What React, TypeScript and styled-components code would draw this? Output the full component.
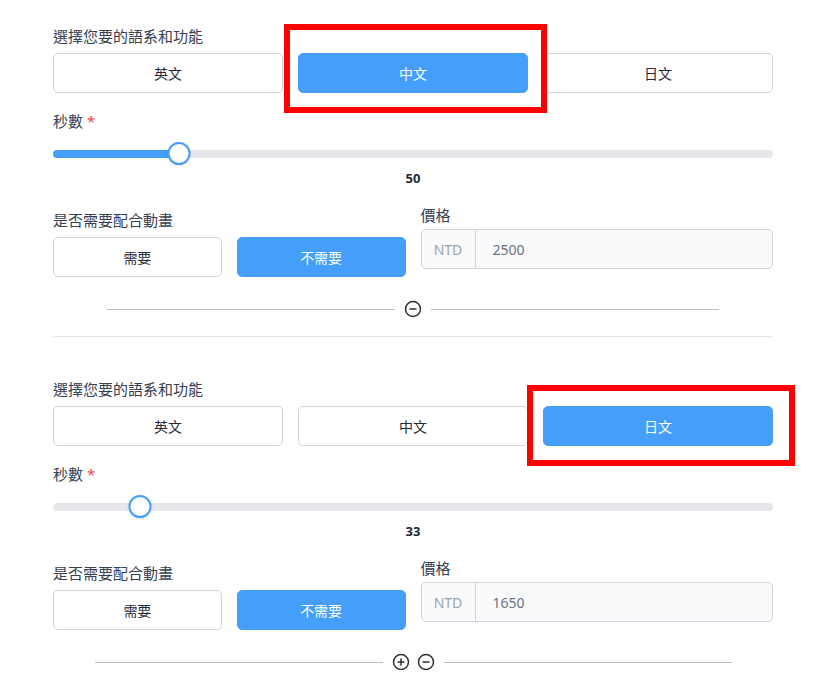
import styled, { createGlobalStyle } from 'styled-components'
import { CirclePlus, CircleMinus } from 'lucide-react'

const GlobalStyle = createGlobalStyle`
  body {
    margin: 0;
    background: #ffffff;
    font-family: "Noto Sans", "Noto Sans CJK TC", sans-serif;
    color: #1f2937;
  }
`

const BLUE = '#459ffa'

const Page = styled.div`
  width: 720px;
  padding: 25px 0 0 53px;
`

const Section = styled.section`
  display: flex;
  flex-direction: column;
`

const FieldLabel = styled.div<{ $top?: number }>`
  font-size: 15px;
  line-height: 22px;
  color: #374151;
  margin-top: ${p => p.$top ?? 0}px;
`

const Required = styled.span`
  color: #ef4444;
  margin-left: 4px;
`

const ButtonRow = styled.div<{ $cols: number; $gap: number; $top: number }>`
  display: grid;
  grid-template-columns: repeat(${p => p.$cols}, 1fr);
  gap: ${p => p.$gap}px;
  margin-top: ${p => p.$top}px;
`

const Choice = styled.div<{ $active?: boolean }>`
  position: relative;
  height: 40px;
  box-sizing: border-box;
  display: flex;
  align-items: center;
  justify-content: center;
  padding-bottom: 1px;
  border-radius: 5px;
  font-size: 14px;
  border: 1px solid ${p => (p.$active ? BLUE : '#d1d5db')};
  background: ${p => (p.$active ? BLUE : '#ffffff')};
  color: ${p => (p.$active ? '#ffffff' : '#1f2937')};
`

const Highlight = styled.div<{ $t: number; $r: number; $b: number; $l: number }>`
  position: absolute;
  top: -${p => p.$t}px;
  right: -${p => p.$r}px;
  bottom: -${p => p.$b}px;
  left: -${p => p.$l}px;
  border: 6px solid #ff0000;
  z-index: 2;
  pointer-events: none;
`

const SliderWrap = styled.div`
  position: relative;
  height: 23px;
  margin-top: 10px;
`

const Track = styled.div`
  position: absolute;
  left: 0;
  right: 0;
  top: 7.5px;
  height: 8px;
  border-radius: 4px;
  background: #e5e7eb;
`

const Fill = styled.div`
  position: absolute;
  left: 0;
  top: 7.5px;
  height: 8px;
  border-radius: 4px;
  background: ${BLUE};
`

const Thumb = styled.div`
  position: absolute;
  top: 0;
  width: 23px;
  height: 23px;
  box-sizing: border-box;
  border-radius: 50%;
  border: 2px solid ${BLUE};
  background: #ffffff;
  box-shadow: 0 1px 3px rgba(0, 0, 0, 0.12);
  transform: translateX(-50%);
`

const SliderValue = styled.div`
  text-align: center;
  font-size: 13px;
  font-weight: 700;
  line-height: 18px;
  color: #1f2937;
  margin-top: 4px;
`

const TwoCols = styled.div`
  display: grid;
  grid-template-columns: 1fr 1fr;
  gap: 15px;
  margin-top: 17px;
`

const Column = styled.div<{ $pad?: number }>`
  display: flex;
  flex-direction: column;
  padding-top: ${p => p.$pad ?? 0}px;
`

const InputGroup = styled.div`
  display: flex;
  height: 40px;
  box-sizing: border-box;
  margin-top: 3px;
  border: 1px solid #d1d5db;
  border-radius: 5px;
  background: #f9fafb;
  font-size: 14px;
`

const Addon = styled.div`
  width: 53px;
  display: flex;
  align-items: center;
  justify-content: center;
  border-right: 1px solid #d1d5db;
  color: #9ca3af;
`

const InputValue = styled.div`
  display: flex;
  align-items: center;
  padding-left: 17px;
  color: #6b7280;
`

const Divider = styled.div`
  display: flex;
  align-items: center;
  justify-content: center;
  gap: 9px;
  height: 16px;
  margin-top: 24px;
  color: #2f2f2f;
`

const DividerLine = styled.div`
  width: 40%;
  height: 1px;
  background: #bdbdbd;
`

const Icons = styled.div`
  display: flex;
  gap: 7px;
  svg {
    display: block;
  }
`

const Separator = styled.hr`
  border: none;
  height: 1px;
  background: #e5e7eb;
  margin: 19px 0 41px;
`

const LANGS = ['英文', '中文', '日文']

type Box = { t: number; r: number; b: number; l: number }

type Item = {
  lang: number
  seconds: number
  filled: boolean
  price: number
  box: Box
  canAdd: boolean
}

const items: Item[] = [
  { lang: 1, seconds: 50, filled: true, price: 2500, box: { t: 30, r: 20, b: 21, l: 15 }, canAdd: false },
  { lang: 2, seconds: 33, filled: false, price: 1650, box: { t: 22, r: 23, b: 21, l: 17 }, canAdd: true },
]

const MAX = 305

function Slider({ value, filled }: { value: number; filled: boolean }) {
  const pos = `calc(11.5px + (100% - 23px) * ${value / MAX})`
  return (
    <>
      <SliderWrap>
        <Track />
        {filled && <Fill style={{ width: pos }} />}
        <Thumb style={{ left: pos }} />
      </SliderWrap>
      <SliderValue>{value}</SliderValue>
    </>
  )
}

function OrderSection({ item, last }: { item: Item; last: boolean }) {
  return (
    <Section>
      <FieldLabel>選擇您要的語系和功能</FieldLabel>
      <ButtonRow $cols={3} $gap={15} $top={6}>
        {LANGS.map((l, i) => (
          <Choice key={l} $active={i === item.lang}>
            {l}
            {i === item.lang && (
              <Highlight $t={item.box.t} $r={item.box.r} $b={item.box.b} $l={item.box.l} />
            )}
          </Choice>
        ))}
      </ButtonRow>

      <FieldLabel $top={17}>
        秒數<Required>*</Required>
      </FieldLabel>
      <Slider value={item.seconds} filled={item.filled} />

      <TwoCols>
        <Column $pad={5}>
          <FieldLabel>是否需要配合動畫</FieldLabel>
          <ButtonRow $cols={2} $gap={15} $top={6}>
            <Choice>需要</Choice>
            <Choice $active>不需要</Choice>
          </ButtonRow>
        </Column>
        <Column>
          <FieldLabel>價格</FieldLabel>
          <InputGroup>
            <Addon>NTD</Addon>
            <InputValue>{item.price}</InputValue>
          </InputGroup>
        </Column>
      </TwoCols>

      <Divider>
        <DividerLine />
        <Icons>
          {item.canAdd && <CirclePlus size={18} strokeWidth={2} />}
          <CircleMinus size={18} strokeWidth={2} />
        </Icons>
        <DividerLine />
      </Divider>
      {!last && <Separator />}
    </Section>
  )
}

export default function App() {
  return (
    <>
      <GlobalStyle />
      <Page>
        {items.map((it, i) => (
          <OrderSection key={i} item={it} last={i === items.length - 1} />
        ))}
      </Page>
    </>
  )
}
